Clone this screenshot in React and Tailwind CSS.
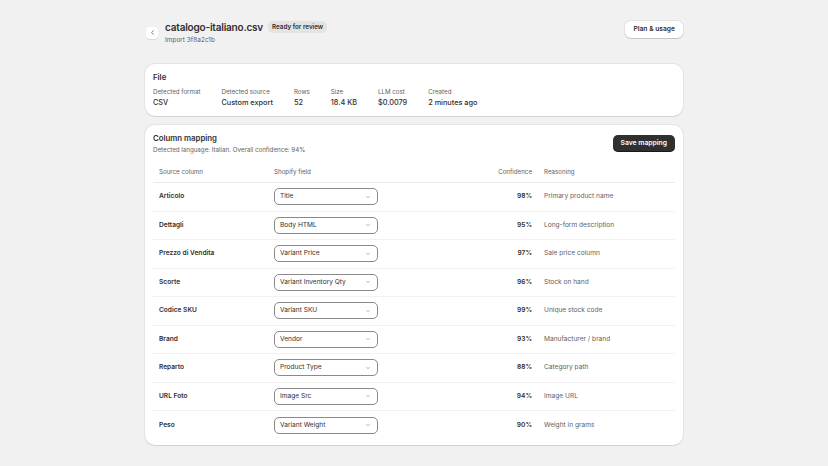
import { ChevronLeft, ChevronDown } from 'lucide-react';

const fileMeta = [
  { label: 'Detected format', value: 'CSV' },
  { label: 'Detected source', value: 'Custom export' },
  { label: 'Rows', value: '52' },
  { label: 'Size', value: '18.4 KB' },
  { label: 'LLM cost', value: '$0.0079' },
  { label: 'Created', value: '2 minutes ago' },
];

const mappings = [
  { source: 'Articolo', field: 'Title', confidence: 98, reason: 'Primary product name' },
  { source: 'Dettagli', field: 'Body HTML', confidence: 95, reason: 'Long-form description' },
  { source: 'Prezzo di Vendita', field: 'Variant Price', confidence: 97, reason: 'Sale price column' },
  { source: 'Scorte', field: 'Variant Inventory Qty', confidence: 96, reason: 'Stock on hand' },
  { source: 'Codice SKU', field: 'Variant SKU', confidence: 99, reason: 'Unique stock code' },
  { source: 'Brand', field: 'Vendor', confidence: 93, reason: 'Manufacturer / brand' },
  { source: 'Reparto', field: 'Product Type', confidence: 88, reason: 'Category path' },
  { source: 'URL Foto', field: 'Image Src', confidence: 94, reason: 'Image URL' },
  { source: 'Peso', field: 'Variant Weight', confidence: 90, reason: 'Weight in grams' },
];

const Card = ({ children, className = '' }) => (
  <div className={`bg-white rounded-[10px] shadow-[0_1px_0_rgba(0,0,0,0.07),0_0_0_1px_rgba(0,0,0,0.05)] ${className}`}>
    {children}
  </div>
);

const SelectBox = ({ value }) => (
  <div className="w-[104px] h-[17px] rounded-[5px] border border-[#8a8a8a] bg-white flex items-center justify-between pl-[5px] pr-[6px]">
    <span className="text-[6.6px] leading-[9px] text-[#303030]">{value}</span>
    <ChevronDown className="w-[6px] h-[6px] text-[#8a8a8a]" strokeWidth={2.5} />
  </div>
);

export default function App() {
  return (
    <div className="min-h-screen bg-[#f1f1f1] font-['Inter',sans-serif] text-[#303030]">
      <div className="w-[538px] mx-auto pt-[21px] pb-[20px]">
        {/* header */}
        <div className="flex items-start justify-between">
          <div className="flex items-center gap-[7px]">
            <button className="w-[12px] h-[12px] ml-[1px] rounded-[4px] bg-white shadow-[0_1px_0_rgba(0,0,0,0.1)] flex items-center justify-center">
              <ChevronLeft className="w-[7px] h-[7px] text-[#4a4a4a]" strokeWidth={2.5} />
            </button>
            <div>
              <div className="flex items-center gap-[5px]">
                <h1 className="text-[10px] font-semibold leading-[12px] tracking-[-0.2px]">catalogo-italiano.csv</h1>
                <span className="bg-[#e3e3e3] rounded-[5px] px-[4px] h-[12px] leading-[12px] text-[6.3px] font-semibold text-[#303030]">
                  Ready for review
                </span>
              </div>
              <div className="text-[6.5px] text-[#616161] leading-[9px] mt-[2.5px]">Import 3f8a2c1b</div>
            </div>
          </div>
          <button className="h-[17px] px-[8px] rounded-[6px] bg-white shadow-[0_1px_0_rgba(0,0,0,0.12),0_0_0_1px_rgba(0,0,0,0.06)] text-[6.7px] font-semibold">
            Plan &amp; usage
          </button>
        </div>

        {/* file card */}
        <Card className="mt-[19.5px] px-[8px] pt-[8px] pb-[8px]">
          <h2 className="text-[7.8px] font-semibold leading-[10px]">File</h2>
          <div className="flex gap-[21px] mt-[4.5px]">
            {fileMeta.map((m) => (
              <div key={m.label}>
                <div className="text-[6.2px] text-[#616161] leading-[9px]">{m.label}</div>
                <div className="text-[7.3px] font-medium leading-[10px] mt-[2.5px]">{m.value}</div>
              </div>
            ))}
          </div>
        </Card>

        {/* column mapping card */}
        <Card className="mt-[9px] px-[8px] pt-[8px] pb-[5.5px]">
          <div className="flex items-start justify-between">
            <div>
              <h2 className="text-[7.8px] font-semibold leading-[10px]">Column mapping</h2>
              <p className="text-[6.2px] text-[#616161] leading-[9px] mt-[1.5px]">
                Detected language: Italian. Overall confidence: 94%
              </p>
            </div>
            <button className="h-[17px] px-[8px] mt-[2px] rounded-[5px] bg-[#303030] text-white text-[6.8px] font-semibold shadow-[inset_0_-1px_0_rgba(0,0,0,0.5)]">
              Save mapping
            </button>
          </div>

          <div className="mt-[7.5px]">
            <div className="grid grid-cols-[115px_1fr_76px_137px] h-[22px] items-center border-b border-[#ebebeb] text-[6.2px] text-[#616161]">
              <div className="px-[6px]">Source column</div>
              <div className="px-[6px]">Shopify field</div>
              <div className="px-[6px] text-right">Confidence</div>
              <div className="px-[6px]">Reasoning</div>
            </div>
            {mappings.map((row, i) => (
              <div
                key={row.source}
                className={`grid grid-cols-[115px_1fr_76px_137px] h-[28.5px] items-center leading-[9px] ${
                  i < mappings.length - 1 ? 'border-b border-[#f1f1f1]' : ''
                }`}
              >
                <div className="px-[6px] text-[6.6px] font-semibold">{row.source}</div>
                <div className="px-[6px]">
                  <SelectBox value={row.field} />
                </div>
                <div className="px-[6px] text-right text-[6.6px] font-semibold">{row.confidence}%</div>
                <div className="px-[6px] text-[6.6px] text-[#616161]">{row.reason}</div>
              </div>
            ))}
          </div>
        </Card>
      </div>
    </div>
  );
}
